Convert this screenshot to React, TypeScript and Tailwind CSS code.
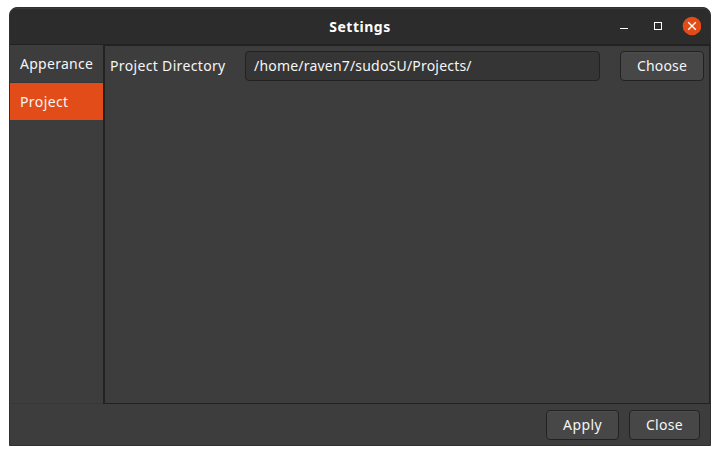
import type { ReactNode } from "react";

function Button({ className, children }: { className: string; children: ReactNode }) {
  return (
    <button
      className={`flex h-[30px] shrink-0 items-center justify-center rounded-[4px] border border-[#222222] bg-[#474747] pb-px shadow-[inset_0_1px_0_#4d4d4d] ${className}`}
    >
      {children}
    </button>
  );
}

function TitleBar() {
  return (
    <header className="grid h-[37px] shrink-0 grid-cols-[1fr_auto_1fr] items-center border-b border-[#222222] bg-[#2c2c2c] shadow-[inset_0_1px_0_#3a3a3a]">
      <span />
      <h1 className="pt-px text-[14px] font-bold tracking-[0.5px] text-white">Settings</h1>
      <div className="flex items-center justify-end pr-[9px]">
        <svg width="84" height="20" viewBox="0 0 84 20" fill="none">
          <path d="M3 12.5H11" stroke="#fff" />
          <rect x="37.5" y="6.5" width="7" height="7" stroke="#fff" />
          <circle cx="75" cy="10" r="9.3" fill="#e24c18" />
          <path d="M71.2 6.2L78.8 13.8M78.8 6.2L71.2 13.8" stroke="#fff" strokeWidth="1.3" />
        </svg>
      </div>
    </header>
  );
}

export default function App() {
  return (
    <div className="h-[455px] w-[720px] bg-white pt-[7px] pl-[9px] font-['Noto_Sans',sans-serif] text-[14px] leading-[20px] text-[#f5f5f5]">
      <div className="flex h-[439px] w-[702px] flex-col overflow-hidden rounded-t-[8px] border border-[#303030] bg-[#3d3d3d]">
        <TitleBar />
        <div className="flex h-[359px] shrink-0">
          <nav className="w-[93px] shrink-0 border-b border-[#373737]">
            <div className="flex h-[38px] items-center border-b border-[#353535] pl-[10px] tracking-[0.27px]">
              Apperance
            </div>
            <div className="flex h-[37px] items-center bg-[#e24c18] pl-[10px] tracking-[0.4px]">Project</div>
          </nav>
          <main className="min-w-0 flex-1 border border-l-2 border-[#222222]">
            <div className="flex items-center pt-[5px] pr-[5px] pl-[5px]">
              <label className="w-[135px] shrink-0 pb-px tracking-[0.34px]">Project Directory</label>
              <div className="mr-[20px] flex h-[30px] w-[355px] shrink-0 items-center rounded-[4px] border border-[#222222] bg-[#353535] pb-px pl-[8px] tracking-[0.2px]">
                /home/raven7/sudoSU/Projects/
              </div>
              <Button className="w-[84px] tracking-[0.2px]">Choose</Button>
            </div>
          </main>
        </div>
        <footer className="flex flex-1 items-start justify-end gap-[10px] pt-[6px] pr-[10px]">
          <Button className="w-[73px] tracking-[0.4px]">Apply</Button>
          <Button className="w-[71px] tracking-[0.3px]">Close</Button>
        </footer>
      </div>
    </div>
  );
}
